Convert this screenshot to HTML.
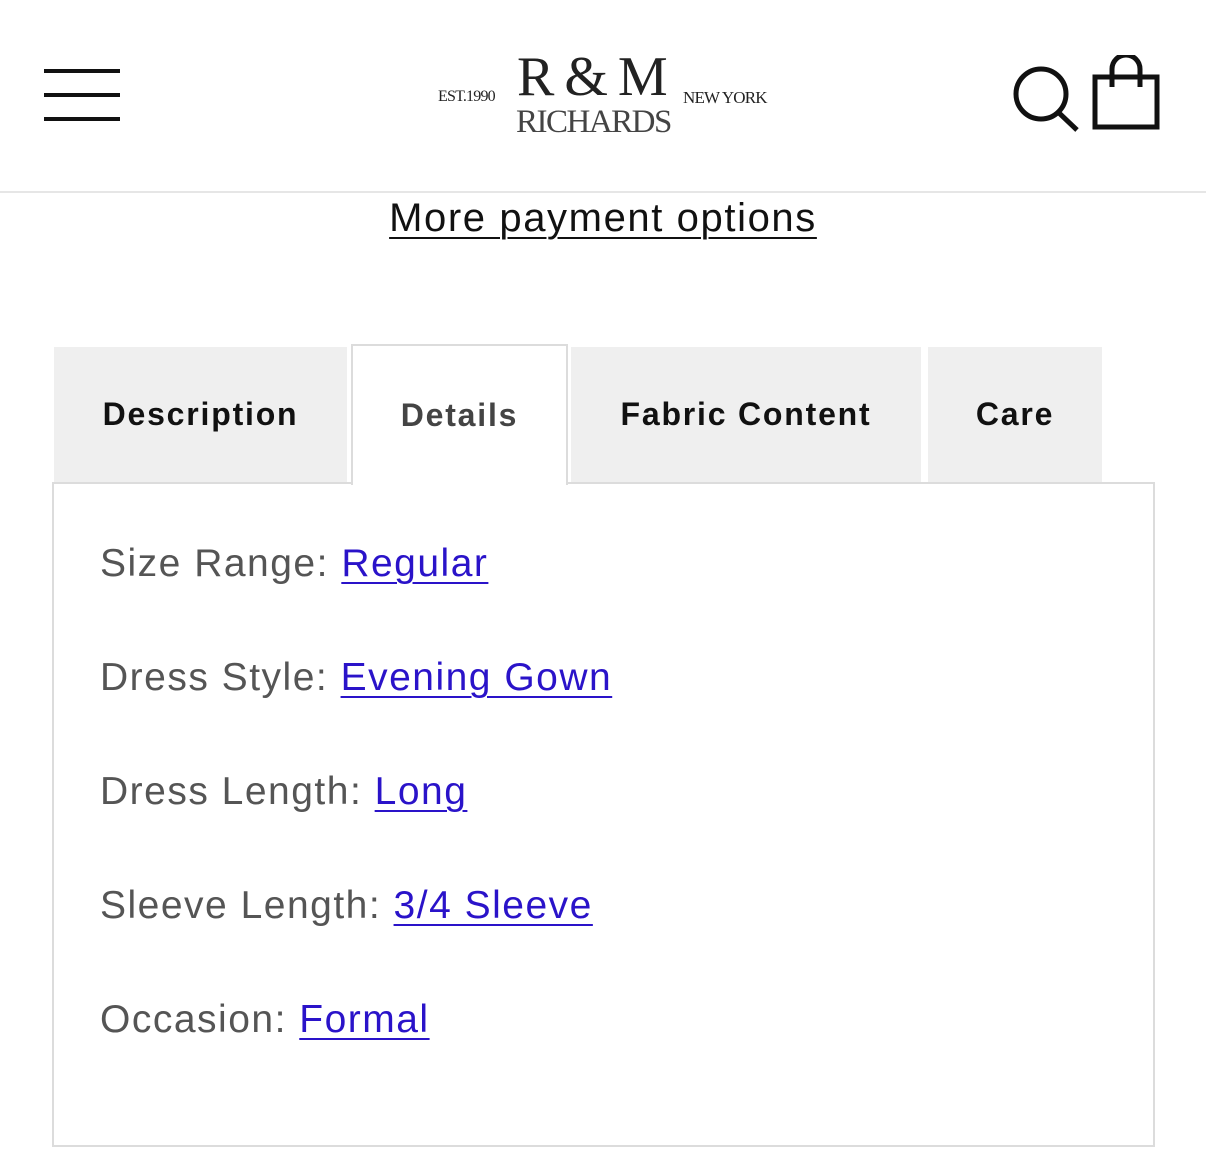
<!DOCTYPE html>
<html><head><meta charset="utf-8"><style>
*{margin:0;padding:0;box-sizing:border-box}
body{width:1206px;height:1155px;background:#fff;font-family:"Liberation Sans",sans-serif;position:relative;overflow:hidden}
.hdr{position:absolute;left:0;top:0;width:1206px;height:193px;border-bottom:2px solid #e6e6e6}
.burger span{position:absolute;left:44px;width:76px;height:4px;background:#111}
.logo{position:absolute;font-family:"Liberation Serif",serif;color:#222;white-space:nowrap}
.more{position:absolute;left:0;width:1206px;top:196px;text-align:center;font-size:40px;color:#111;text-decoration:underline;text-underline-offset:6px;text-decoration-thickness:2px;letter-spacing:1.6px}
.tab{position:absolute;top:347px;height:135px;background:#efefef;font-weight:bold;font-size:32px;color:#111;display:flex;align-items:center;justify-content:center;letter-spacing:1.8px}
.box{position:absolute;left:52px;top:482px;width:1103px;height:665px;border:2px solid #dcdcdc}
.act{position:absolute;left:351px;top:344px;width:217px;height:141px;background:#fff;border:2px solid #dcdcdc;border-bottom:none;font-weight:bold;font-size:32px;color:#444;display:flex;align-items:center;justify-content:center;letter-spacing:1.8px}
.row{position:absolute;left:100px;font-size:39px;color:#555;letter-spacing:1.5px}
.row a{color:#2a13c9;text-decoration:underline;text-underline-offset:6px;text-decoration-thickness:2px}
</style></head><body>
<div class="hdr">
<div class="burger"><span style="top:69px"></span><span style="top:93px"></span><span style="top:117px"></span></div>
<div class="logo" style="left:438px;top:88px;font-size:16px;letter-spacing:-0.8px">EST.1990</div>
<div class="logo" style="left:517px;top:45px;font-size:56px;letter-spacing:-2px">R &amp; M</div>
<div class="logo" style="left:683px;top:88px;font-size:17px;letter-spacing:-0.8px">NEW YORK</div>
<div class="logo" style="left:516px;top:104px;font-size:33px;color:#444;letter-spacing:-1.5px">RICHARDS</div>
<svg style="position:absolute;left:1005px;top:60px" width="80" height="75" viewBox="0 0 80 75"><circle cx="36" cy="34" r="25" fill="none" stroke="#111" stroke-width="5"/><line x1="53" y1="52" x2="72" y2="70" stroke="#111" stroke-width="5"/></svg>
<svg style="position:absolute;left:1090px;top:55px" width="72" height="78" viewBox="0 0 72 78"><rect x="5" y="22" width="62" height="50" fill="none" stroke="#111" stroke-width="5"/><path d="M22 32 V14 a14 14 0 0 1 28 0 V32" fill="none" stroke="#111" stroke-width="5"/></svg>
</div>
<div class="more">More payment options</div>
<div class="box"></div>
<div class="tab" style="left:54px;width:293px">Description</div>
<div class="act">Details</div>
<div class="tab" style="left:571px;width:350px">Fabric Content</div>
<div class="tab" style="left:928px;width:174px">Care</div>
<div class="row" style="top:542px">Size Range: <a>Regular</a></div>
<div class="row" style="top:656px">Dress Style: <a>Evening Gown</a></div>
<div class="row" style="top:770px">Dress Length: <a>Long</a></div>
<div class="row" style="top:884px">Sleeve Length: <a>3/4 Sleeve</a></div>
<div class="row" style="top:998px">Occasion: <a>Formal</a></div>
</body></html>
